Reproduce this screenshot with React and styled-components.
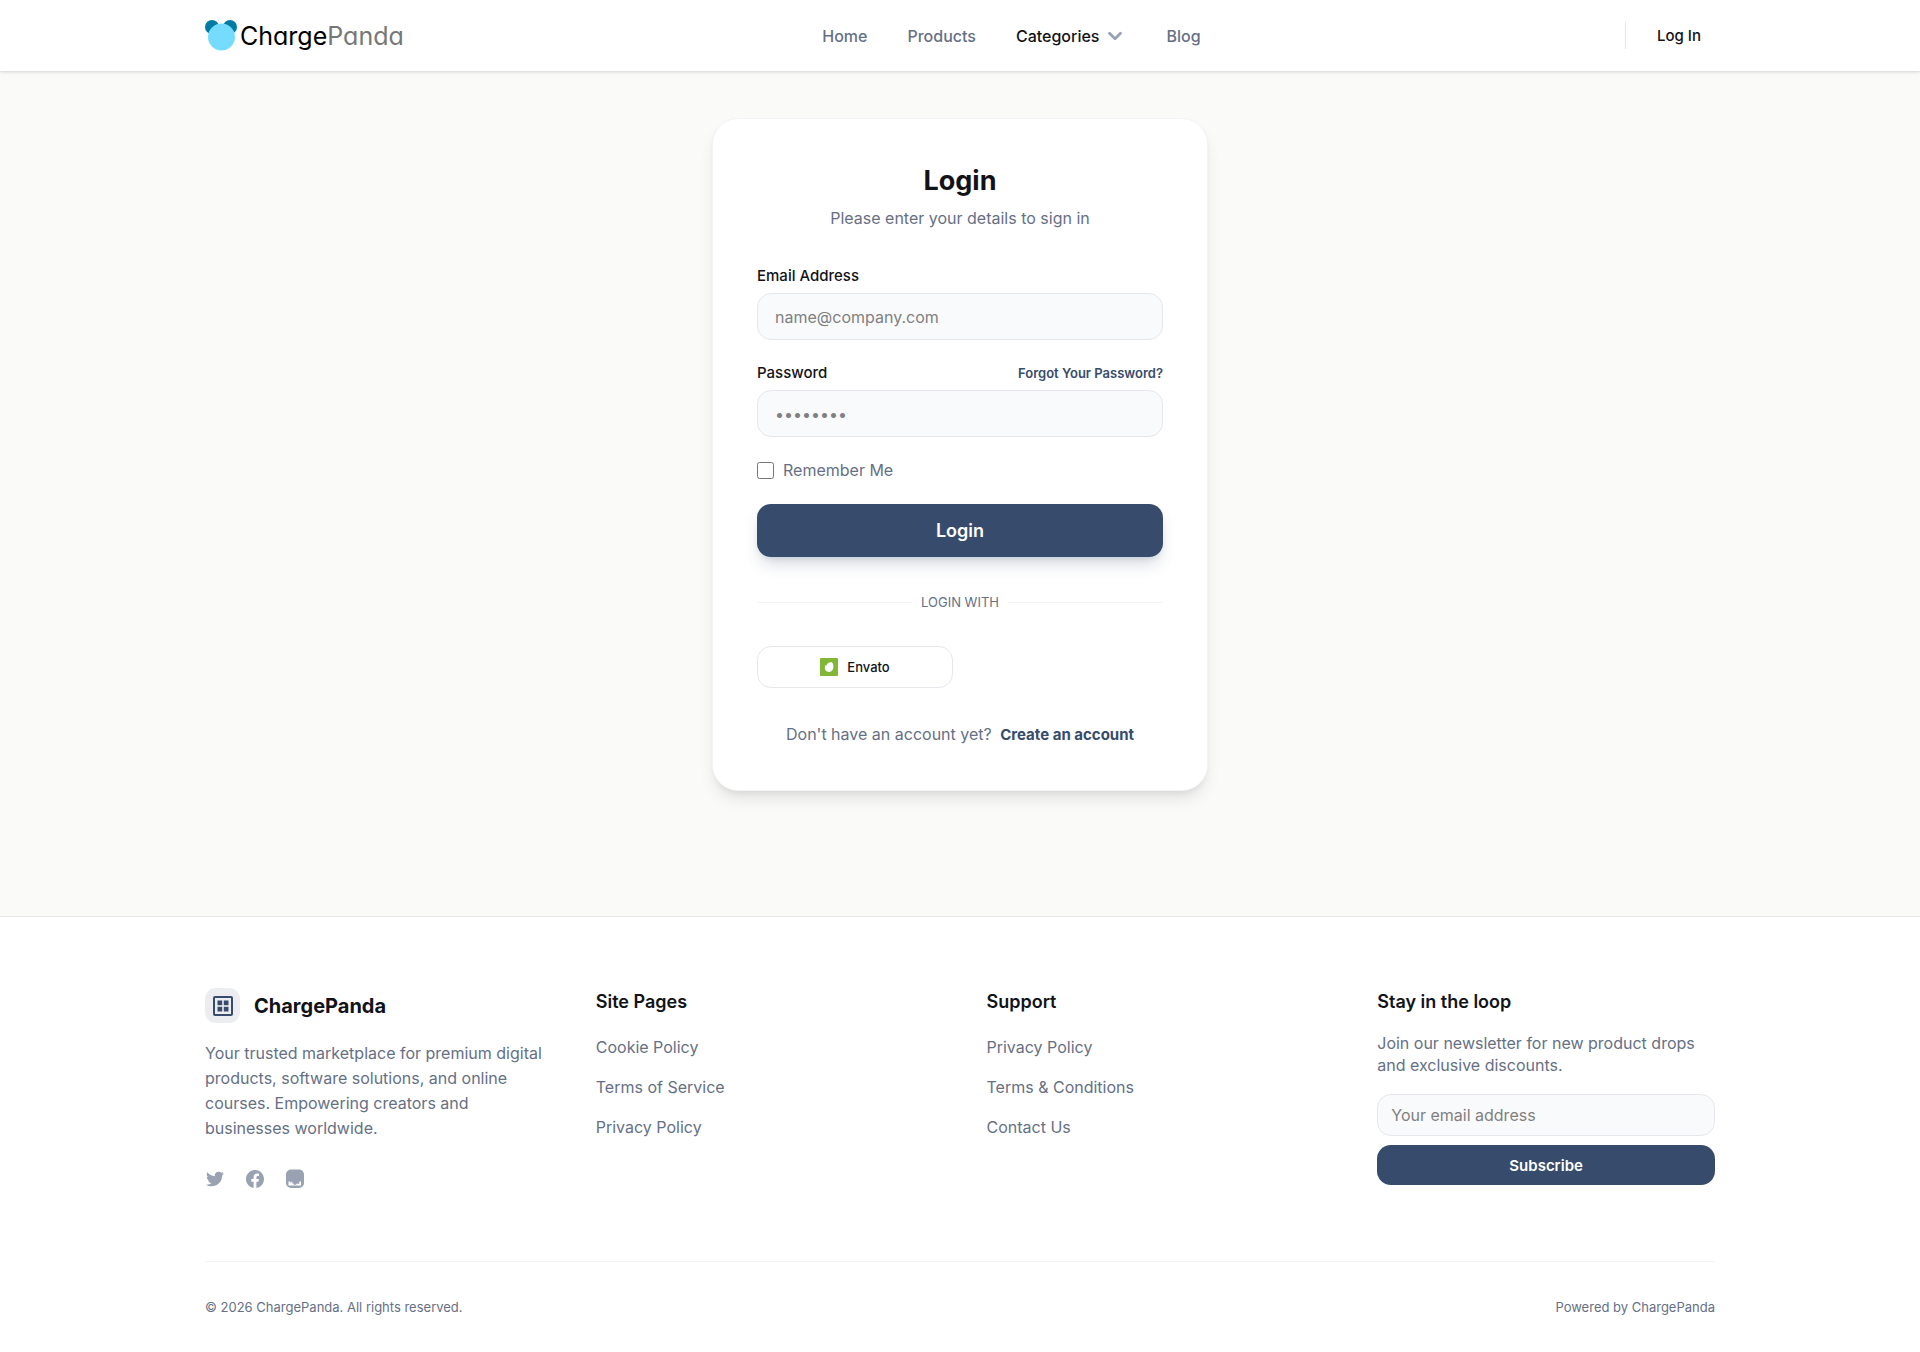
import React from 'react';
import styled, { createGlobalStyle } from 'styled-components';
import { FaTwitter } from 'react-icons/fa';
import { BsFacebook } from 'react-icons/bs';
import { ChevronDown } from 'lucide-react';

const color = {
    ink: '#111318',
    muted: '#667085',
    faint: '#98a2b3',
    primary: '#374c6c',
    line: '#e5e7eb',
    softLine: '#f2f4f5',
    field: '#f9fafc',
    page: '#fafaf8',
};

const GlobalStyle = createGlobalStyle`
    *, *::before, *::after {
        box-sizing: border-box;
    }

    body {
        margin: 0;
        background: #fff;
        color: ${color.ink};
        font-family: Inter, "Liberation Sans", sans-serif;
        font-size: 16px;
        line-height: 22px;
    }

    h1, h2, p, ul {
        margin: 0;
        padding: 0;
    }

    a {
        color: inherit;
        text-decoration: none;
    }

    button, input {
        font-family: inherit;
    }
`;

const Container = styled.div`
    max-width: 1510px;
    margin: 0 auto;
`;

const Header = styled.header`
    position: relative;
    background: #fff;
    box-shadow: 0 1px 3px rgba(0, 0, 0, 0.16);
`;

const HeaderRow = styled(Container)`
    display: flex;
    align-items: center;
    justify-content: space-between;
    height: 71px;
`;

const LogoLink = styled.a`
    display: flex;
    align-items: center;
    gap: 3px;
    font-size: 25px;
    font-weight: 400;
    line-height: 32px;
    font-feature-settings: "cv11";
    color: #000;

    span {
        color: #777;
    }
`;

const Nav = styled.nav`
    display: flex;
    align-items: center;
    gap: 40px;
    padding-right: 6px;
    font-weight: 500;
    color: ${color.muted};
`;

const NavButton = styled.button`
    display: flex;
    align-items: center;
    gap: 5px;
    padding: 0;
    border: 0;
    background: none;
    font-size: inherit;
    font-weight: 500;
    line-height: 22px;
    color: ${color.ink};

    svg {
        color: ${color.faint};
    }
`;

const Account = styled.div`
    display: flex;
    align-items: center;
    height: 27px;
    padding: 0 14px 0 31px;
    border-left: 1px solid ${color.line};
    font-size: 15px;
    font-weight: 500;
`;

const Main = styled.main`
    padding: 47px 20px 125px;
    background: ${color.page};
`;

const Card = styled.section`
    max-width: 496px;
    margin: 0 auto;
    padding: 44px;
    border: 1px solid ${color.softLine};
    border-radius: 26px;
    background: #fff;
    box-shadow: 0 10px 16px -3px rgba(0, 0, 0, 0.1), 0 4px 7px -4px rgba(0, 0, 0, 0.1);
`;

const Title = styled.h1`
    font-size: 27px;
    font-weight: 700;
    line-height: 36px;
    text-align: center;
`;

const Lead = styled.p`
    margin-top: 8px;
    color: ${color.muted};
    text-align: center;
`;

const Form = styled.form`
    margin-top: 36px;
`;

const Field = styled.div`
    margin-bottom: 22px;
`;

const FieldHead = styled.div`
    display: flex;
    align-items: center;
    justify-content: space-between;
    margin-bottom: 6px;

    label {
        font-size: 15px;
        font-weight: 500;
    }

    a {
        font-size: 13px;
        font-weight: 600;
        color: ${color.primary};
    }
`;

const Input = styled.input`
    display: block;
    width: 100%;
    height: ${({ $compact }) => ($compact ? '42px' : '47px')};
    padding: 0 ${({ $compact }) => ($compact ? '13px' : '17px')};
    border: 1px solid ${color.line};
    border-radius: 14px;
    background: ${color.field};
    font-size: 16px;
    color: ${color.ink};

    &::placeholder {
        color: #808080;
    }
`;

const Remember = styled.label`
    display: flex;
    align-items: center;
    gap: 9px;
    margin-bottom: 23px;
    color: ${color.muted};

    input {
        width: 17px;
        height: 17px;
        margin: 0;
    }
`;

const Button = styled.button`
    display: block;
    width: 100%;
    height: ${({ $compact }) => ($compact ? '40px' : '53px')};
    border: 0;
    border-radius: 14px;
    background: ${color.primary};
    color: #fff;
    font-size: ${({ $compact }) => ($compact ? '15px' : '18px')};
    font-weight: 600;
    box-shadow: ${({ $compact }) =>
        $compact ? 'none' : '0 10px 16px -3px rgba(55, 76, 108, 0.2), 0 4px 7px -4px rgba(55, 76, 108, 0.2)'};
`;

const Divider = styled.div`
    display: flex;
    align-items: center;
    gap: 9px;
    margin: 34px 0 33px;
    font-size: 13px;
    color: ${color.muted};

    &::before, &::after {
        content: "";
        flex: 1;
        height: 1px;
        background: ${color.softLine};
    }
`;

const Providers = styled.div`
    display: grid;
    grid-template-columns: 1fr 1fr;
    gap: 14px;
`;

const ProviderButton = styled.button`
    display: flex;
    align-items: center;
    justify-content: center;
    gap: 9px;
    height: 42px;
    border: 1px solid ${color.line};
    border-radius: 14px;
    background: #fff;
    font-size: 13px;
    font-weight: 500;
    color: ${color.ink};
`;

const SignUp = styled.p`
    margin-top: 35px;
    color: ${color.muted};
    text-align: center;

    a {
        margin-left: 4px;
        font-size: 15px;
        font-weight: 700;
        color: ${color.primary};
    }
`;

const Footer = styled.footer`
    padding: 71px 20px 36px;
    border-top: 1px solid ${color.line};
    background: #fff;
`;

const FooterGrid = styled(Container)`
    display: grid;
    grid-template-columns: repeat(4, 1fr);
    align-items: start;
    gap: 53px;
    padding-bottom: 72px;
`;

const Brand = styled.div`
    display: flex;
    align-items: center;
    gap: 14px;
    font-size: 20px;
    font-weight: 700;
`;

const BrandMark = styled.span`
    display: flex;
    align-items: center;
    justify-content: center;
    width: 35px;
    height: 35px;
    border-radius: 11px;
    background: #ebedf0;
`;

const About = styled.p`
    margin-top: 18px;
    line-height: 25px;
    color: ${color.muted};
`;

const Socials = styled.div`
    display: flex;
    align-items: center;
    gap: 20px;
    margin-top: 28px;
    color: ${color.faint};

    a {
        display: flex;
        justify-content: center;
        width: 20px;
    }
`;

const FooterTitle = styled.h2`
    font-size: 18px;
    font-weight: 600;
    line-height: 28px;
`;

const LinkList = styled.ul`
    display: grid;
    gap: 18px;
    margin-top: 20px;
    list-style: none;
    color: ${color.muted};
`;

const Newsletter = styled.form`
    display: grid;
    gap: 9px;

    p {
        margin: 7px 0 9px;
        color: ${color.muted};
    }
`;

const Legal = styled(Container)`
    display: flex;
    justify-content: space-between;
    padding-top: 34px;
    border-top: 1px solid ${color.softLine};
    font-size: 13px;
    color: ${color.muted};
`;

const PandaIcon = () => (
    <svg width="32" height="31" viewBox="0 0 32 31" aria-hidden="true">
        <circle cx="7" cy="7" r="7" fill="#007ba3" />
        <circle cx="25" cy="7" r="7" fill="#007ba3" />
        <circle cx="16.500" cy="17" r="13.500" fill="#76dcff" />
    </svg>
);

const EnvatoIcon = () => (
    <svg width="18" height="18" viewBox="0 0 18 18" aria-hidden="true">
        <rect width="18" height="18" rx="1" fill="#82b636" />
        <path
            d="M11.600 4.300c1.800.8 2.300 4.600 1.300 7-.9 2-2.500 2.800-4.200 2.700-2.500-.2-4.200-2.200-3.900-4.500.1-1 .4-1.900.9-2.200.4-.1.500.2.500.8.2-2.200 3-4.500 5.400-3.800z"
            fill="#fff"
        />
    </svg>
);

const GridIcon = () => (
    <svg width="20" height="20" viewBox="0 0 20 20" aria-hidden="true">
        <rect x="1" y="1" width="18" height="18" rx="1" fill="none" stroke={color.primary} strokeWidth="2" />
        <g fill={color.primary}>
            <rect x="4.500" y="4.500" width="4.700" height="4.700" />
            <rect x="10.800" y="4.500" width="4.700" height="4.700" />
            <rect x="4.500" y="10.800" width="4.700" height="4.700" />
            <rect x="10.800" y="10.800" width="4.700" height="4.700" />
        </g>
    </svg>
);

const InboxIcon = () => (
    <svg width="20" height="20" viewBox="0 0 20 20" aria-hidden="true">
        <path
            fillRule="evenodd"
            fill="currentColor"
            d="M6 0.500h8a5 5 0 0 1 5 5v8.500a5 5 0 0 1-5 5H6a5 5 0 0 1-5-5V5.500a5 5 0 0 1 5-5zM3.500 12.500v4h12.500V12.500h-1.700v2.300h-3v.9H8.800v-1.200H7.300V12.700H6.200v.8H5.200V12.500z"
        />
    </svg>
);

const sitePages = ['Cookie Policy', 'Terms of Service', 'Privacy Policy'];
const supportPages = ['Privacy Policy', 'Terms & Conditions', 'Contact Us'];

function FooterLinks({ title, links }) {
    return (
        <div>
            <FooterTitle>{title}</FooterTitle>
            <LinkList>
                {links.map((link) => (
                    <li key={link}>
                        <a href="#">{link}</a>
                    </li>
                ))}
            </LinkList>
        </div>
    );
}

function LoginForm() {
    return (
        <Card>
            <Title>Login</Title>
            <Lead>Please enter your details to sign in</Lead>
            <Form>
                <Field>
                    <FieldHead>
                        <label htmlFor="email">Email Address</label>
                    </FieldHead>
                    <Input id="email" type="email" placeholder="name@company.com" />
                </Field>
                <Field>
                    <FieldHead>
                        <label htmlFor="password">Password</label>
                        <a href="#">Forgot Your Password?</a>
                    </FieldHead>
                    <Input id="password" type="password" placeholder="••••••••" />
                </Field>
                <Remember>
                    <input type="checkbox" />
                    Remember Me
                </Remember>
                <Button type="submit">Login</Button>
            </Form>
            <Divider>LOGIN WITH</Divider>
            <Providers>
                <ProviderButton type="button">
                    <EnvatoIcon />
                    Envato
                </ProviderButton>
            </Providers>
            <SignUp>
                Don't have an account yet? <a href="#">Create an account</a>
            </SignUp>
        </Card>
    );
}

function App() {
    return (
        <>
            <GlobalStyle />
            <Header>
                <HeaderRow>
                    <LogoLink href="#">
                        <PandaIcon />
                        <div>
                            Charge<span>Panda</span>
                        </div>
                    </LogoLink>
                    <Nav>
                        <a href="#">Home</a>
                        <a href="#">Products</a>
                        <NavButton type="button">
                            Categories
                            <ChevronDown size={22} strokeWidth={3} />
                        </NavButton>
                        <a href="#">Blog</a>
                    </Nav>
                    <Account>
                        <a href="#">Log In</a>
                    </Account>
                </HeaderRow>
            </Header>
            <Main>
                <LoginForm />
            </Main>
            <Footer>
                <FooterGrid>
                    <div>
                        <Brand>
                            <BrandMark>
                                <GridIcon />
                            </BrandMark>
                            ChargePanda
                        </Brand>
                        <About>
                            Your trusted marketplace for premium digital products, software solutions, and online
                            courses. Empowering creators and businesses worldwide.
                        </About>
                        <Socials>
                            <a href="#" aria-label="Twitter">
                                <FaTwitter size={18} />
                            </a>
                            <a href="#" aria-label="Facebook">
                                <BsFacebook size={18} />
                            </a>
                            <a href="#" aria-label="Instagram">
                                <InboxIcon />
                            </a>
                        </Socials>
                    </div>
                    <FooterLinks title="Site Pages" links={sitePages} />
                    <FooterLinks title="Support" links={supportPages} />
                    <Newsletter>
                        <FooterTitle>Stay in the loop</FooterTitle>
                        <p>Join our newsletter for new product drops and exclusive discounts.</p>
                        <Input $compact type="email" placeholder="Your email address" aria-label="Your email address" />
                        <Button $compact type="submit">
                            Subscribe
                        </Button>
                    </Newsletter>
                </FooterGrid>
                <Legal>
                    <span>© 2026 ChargePanda. All rights reserved.</span>
                    <span>Powered by ChargePanda</span>
                </Legal>
            </Footer>
        </>
    );
}

export default App;
